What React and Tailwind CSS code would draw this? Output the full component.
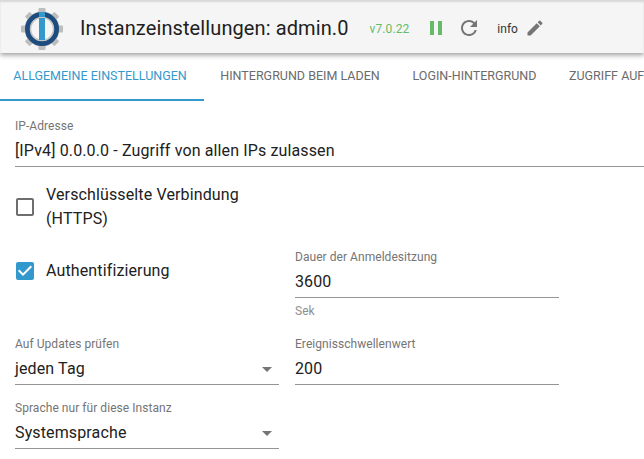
import React from "react";
import {
  MdPause,
  MdRefresh,
  MdEdit,
  MdCheckBox,
  MdCheckBoxOutlineBlank,
  MdArrowDropDown,
} from "react-icons/md";

const Logo = () => {
  const teeth = [0, 45, 90, 135, 180, 225, 270, 315];
  return (
    <svg width="44" height="44" viewBox="0 0 44 44" className="mt-[2px] shrink-0">
      {teeth.map((a) => (
        <rect key={a} x="18.5" y="1" width="7" height="8" rx="1" fill="#bdbdbd" transform={`rotate(${a} 22 22)`} />
      ))}
      <circle cx="22" cy="22" r="17.5" fill="#bdbdbd" />
      <circle cx="22" cy="22" r="14.5" fill="none" stroke="#1c4d7e" strokeWidth="5" />
      <circle cx="22" cy="22" r="11.5" fill="#f5f5f5" stroke="#c4c4c4" strokeWidth="1.5" />
      <rect x="19" y="5" width="6" height="5" fill="#3399cc" />
      <rect x="19" y="11" width="6" height="22" fill="#3399cc" />
    </svg>
  );
};

const Field = ({ label, value, helper, select, className = "" }) => (
  <div className={className}>
    <div className="text-[12px] leading-[14px] tracking-[0.05px] text-[#757575]">{label}</div>
    <div className="flex h-[34px] items-center justify-between border-b border-[#949494] pt-[2px] text-[16px] tracking-[0.13px] text-[#212121]">
      <span>{value}</span>
      {select && <MdArrowDropDown size={24} className="text-[#757575]" />}
    </div>
    {helper && <div className="mt-[6px] text-[12px] leading-[14px] text-[#8f8f8f]">{helper}</div>}
  </div>
);

export default function App() {
  const tabs = [
    { label: "ALLGEMEINE EINSTELLUNGEN", active: true, cls: "w-[204px] justify-center pr-[4px]" },
    { label: "HINTERGRUND BEIM LADEN", cls: "w-[192px] justify-center" },
    { label: "LOGIN-HINTERGRUND", cls: "w-[157px] justify-center" },
    { label: "ZUGRIFF AUF", cls: "w-[91px] justify-start pl-[16px]" },
  ];

  return (
    <div className="h-[459px] w-[644px] overflow-hidden bg-white font-['Roboto',sans-serif]">
      <header className="relative z-10 flex h-[53px] items-center bg-[#f5f5f5] pl-[20px] pt-[2px] shadow-[0_2px_5px_rgba(0,0,0,0.4),inset_0_2px_2px_rgba(0,0,0,0.12)]">
        <Logo />
        <h1 className="ml-[16px] text-[20px] leading-[24px] tracking-[0.1px] text-[#212121]">Instanzeinstellungen: admin.0</h1>
        <span className="ml-[21px] mt-[2px] text-[12px] tracking-[0.1px] text-[#66bb6a]">v7.0.22</span>
        <MdPause size={24} className="ml-[15px] text-[#66bb6a]" />
        <MdRefresh size={24} className="ml-[9px] text-[#757575]" />
        <span className="ml-[16px] mt-[2px] text-[12px] text-[#333333]">info</span>
        <MdEdit size={20} className="ml-[7px] text-[#757575]" />
      </header>

      <nav className="flex h-[48px] overflow-hidden">
        {tabs.map((t) => (
          <div
            key={t.label}
            className={`flex h-full shrink-0 items-center whitespace-nowrap border-b-2 text-[12.5px] ${t.cls} ${
              t.active ? "border-[#3399cc] text-[#3399cc]" : "border-transparent text-[#6b6b6b]"
            }`}
          >
            {t.label}
          </div>
        ))}
      </nav>

      <main className="pl-[15px] pt-[18px]">
        <Field label="IP-Adresse" value="[IPv4] 0.0.0.0 - Zugriff von allen IPs zulassen" className="-mr-[10px]" />

        <div className="mt-[16px] flex items-center text-[16px] leading-[24px] tracking-[0.13px] text-[#212121]">
          <MdCheckBoxOutlineBlank size={24} className="-ml-[2px] text-[#6e6e6e]" />
          <span className="ml-[9px] w-[220px]">Verschlüsselte Verbindung (HTTPS)</span>
        </div>

        <div className="mt-[19px] grid grid-cols-[264px_264px] gap-x-[16px] gap-y-[15px]">
          <div className="flex items-center self-start pt-[9px] text-[16px] leading-[24px] tracking-[0.13px] text-[#212121]">
            <MdCheckBox size={24} className="-ml-[2px] text-[#3399cc]" />
            <span className="ml-[9px]">Authentifizierung</span>
          </div>
          <Field label="Dauer der Anmeldesitzung" value="3600" helper="Sek" />
          <Field label="Auf Updates prüfen" value="jeden Tag" select className="mt-[4px]" />
          <Field label="Ereignisschwellenwert" value="200" className="mt-[4px]" />
          <Field label="Sprache nur für diese Instanz" value="Systemsprache" select className="mt-[1px]" />
        </div>
      </main>
    </div>
  );
}
